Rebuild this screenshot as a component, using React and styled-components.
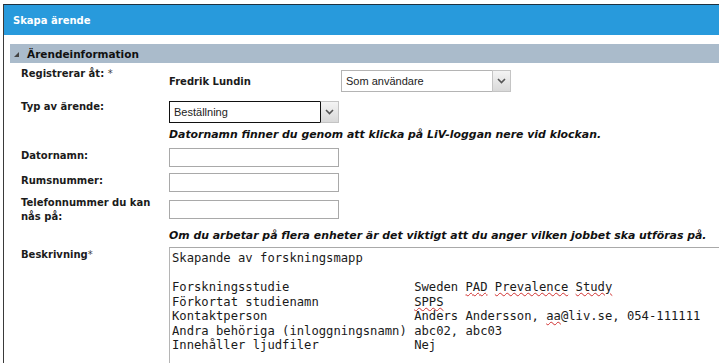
import React from "react";
import styled, { createGlobalStyle } from "styled-components";

const GlobalStyle = createGlobalStyle`
  body {
    margin: 0;
    background: #fff;
    font-family: "DejaVu Sans", Verdana, sans-serif;
    color: #1b1b1b;
  }
`;

const Page = styled.div`
  padding: 4px 0 0 3px;
  height: 359px;
  overflow: hidden;
`;

const Panel = styled.div`
  border-left: 1px solid #3a3a3a;
  border-top: 1px solid #1d3140;
  height: 100%;
`;

const Header = styled.div`
  height: 30px;
  background: #289adc;
  display: flex;
  align-items: center;
  padding-left: 9px;
  color: #fff;
  font-weight: bold;
  font-size: 10px;
`;

const Body = styled.div`
  padding: 9px 0 0 6px;
`;

const SectionBar = styled.div`
  height: 19px;
  background: #aabbcb;
  display: flex;
  align-items: center;
  font-weight: bold;
  font-size: 10.5px;
  color: #111;
`;

const Toggle = styled.svg`
  width: 5px;
  height: 5px;
  margin: 2px 8px 0 4px;
`;

const Form = styled.div`
  padding-left: 11px;
`;

const Row = styled.div`
  display: flex;
  align-items: flex-start;
  margin-top: ${({ $top }) => $top}px;
`;

const Label = styled.div`
  width: 148px;
  flex-shrink: 0;
  font-size: 10px;
  font-weight: bold;
  line-height: 14px;
  padding-top: ${({ $pad }) => $pad || 0}px;
`;

const Required = styled.span`
  font-weight: normal;
  color: #444;
`;

const Field = styled.div`
  display: flex;
  align-items: center;
  padding-top: ${({ $pad }) => $pad || 0}px;
`;

const Value = styled.div`
  width: 172px;
  font-size: 10px;
  font-weight: bold;
`;

const Select = styled.div`
  width: 170px;
  height: 22px;
  box-sizing: border-box;
  display: flex;
  background: #fff;
  font-family: "Liberation Sans", Arial, sans-serif;
  font-size: 11px;
  color: #222;
`;

const SelectText = styled.div`
  flex: 1;
  display: flex;
  align-items: center;
  padding-left: 4px;
  border: 1px solid ${({ $dark }) => ($dark ? "#111" : "#b4b4b4")};
  border-right: none;
`;

const ArrowBox = styled.div`
  width: 17px;
  display: flex;
  align-items: center;
  justify-content: center;
  border: 1px solid #c4c4c4;
  border-left-color: ${({ $dark }) => ($dark ? "#111" : "#c4c4c4")};
  background: linear-gradient(#f4f4f4, #d9d9d9);
`;

const Input = styled.div`
  width: 170px;
  height: 19px;
  box-sizing: border-box;
  border: 1px solid #a9a9a9;
  background: #fff;
  margin-top: ${({ $top }) => $top || 0}px;
`;

const Hint = styled.div`
  margin: ${({ $top }) => $top}px 0 0 148px;
  font-size: 10.9px;
  font-weight: bold;
  font-style: italic;
  line-height: 14px;
  color: #111;
  white-space: nowrap;
`;

const TextArea = styled.div`
  flex: 1;
  height: 130px;
  border-top: 1px solid #a9a9a9;
  border-left: 1px solid #b5b5b5;
  padding: 3px 0 0 2px;
  font-family: "DejaVu Sans Mono", Consolas, monospace;
  font-size: 12.2px;
  line-height: 14.5px;
  white-space: pre;
  color: #1a1a1a;
`;

const Typo = styled.span`
  text-decoration: underline wavy #d03030;
  text-decoration-thickness: 1px;
  text-underline-offset: 1px;
`;

const Chevron = () => (
  <svg width="9" height="6" viewBox="0 0 9 6">
    <path d="M1 1 L4.5 4.5 L8 1" fill="none" stroke="#555" strokeWidth="1.6" />
  </svg>
);

const Dropdown = ({ children, dark }) => (
  <Select>
    <SelectText $dark={dark}>{children}</SelectText>
    <ArrowBox $dark={dark}>
      <Chevron />
    </ArrowBox>
  </Select>
);

export default function App() {
  return (
    <>
      <GlobalStyle />
      <Page>
        <Panel>
          <Header>Skapa ärende</Header>
          <Body>
            <SectionBar>
              <Toggle viewBox="0 0 5 5">
                <path d="M5 0 L5 5 L0 5 Z" fill="#444" />
              </Toggle>
              Ärendeinformation
            </SectionBar>
            <Form>
              <Row $top={4}>
                <Label>
                  Registrerar åt: <Required>*</Required>
                </Label>
                <Field $pad={3}>
                  <Value>Fredrik Lundin</Value>
                  <Dropdown>Som användare</Dropdown>
                </Field>
              </Row>
              <Row $top={8}>
                <Label>Typ av ärende:</Label>
                <Field $pad={1}>
                  <Dropdown dark>Beställning</Dropdown>
                </Field>
              </Row>
              <Hint $top={5}>
                Datornamn finner du genom att klicka på LiV-loggan nere vid klockan.
              </Hint>
              <Row $top={6}>
                <Label $pad={1}>Datornamn:</Label>
                <Input />
              </Row>
              <Row $top={6}>
                <Label $pad={1}>Rumsnummer:</Label>
                <Input />
              </Row>
              <Row $top={4}>
                <Label>
                  Telefonnummer du kan
                  <br />
                  nås på:
                </Label>
                <Input $top={4} />
              </Row>
              <Hint $top={5}>
                Om du arbetar på flera enheter är det viktigt att du anger vilken jobbet ska utföras på.
              </Hint>
              <Row $top={4}>
                <Label $pad={1}>
                  Beskrivning<Required>*</Required>
                </Label>
                <TextArea>
                  {"Skapande av forskningsmapp\n\nForskningsstudie                 Sweden "}
                  <Typo>PAD</Typo> <Typo>Prevalence</Typo> <Typo>Study</Typo>
                  {"\nFörkortat studienamn             "}
                  <Typo>SPPS</Typo>
                  {"\nKontaktperson                    Anders Andersson, "}
                  <Typo>aa</Typo>
                  {"@liv.se, 054-111111\nAndra behöriga (inloggningsnamn) abc02, abc03\nInnehåller ljudfiler             Nej"}
                </TextArea>
              </Row>
            </Form>
          </Body>
        </Panel>
      </Page>
    </>
  );
}
